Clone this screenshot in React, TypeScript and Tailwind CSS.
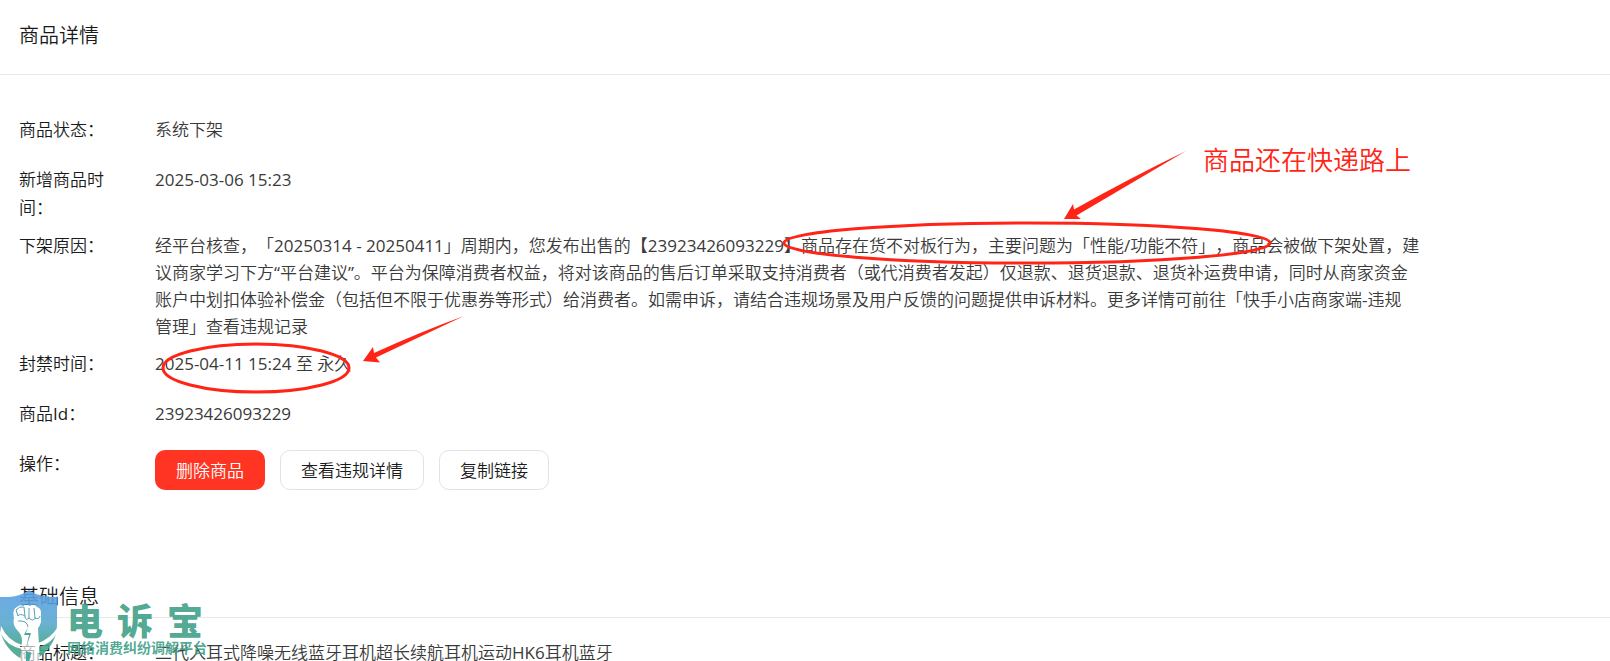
import type { ReactNode } from 'react';

function Row({ label, children }: { label: string; children: ReactNode }) {
  return (
    <div className="mb-[10px] flex min-h-10 items-start">
      <dt className="w-[96px] shrink-0 leading-[28px] text-[#1a1a1a]">{label}</dt>
      <dd className="ml-10 leading-[27px] text-[#3a3a3a]">{children}</dd>
    </div>
  );
}

const outlineButton =
  'h-10 rounded-[10px] border border-[#e1e3eb] bg-white px-5 text-[#1a1a1a]';

function Annotations() {
  return (
    <div className="pointer-events-none absolute left-0 top-0">
      <svg width="1460" height="420" viewBox="0 0 1460 420" fill="none" aria-hidden="true">
        <ellipse cx="1027" cy="243" rx="243" ry="20" stroke="#ff2416" strokeWidth="3" />
        <ellipse cx="256" cy="368" rx="93" ry="24" stroke="#ff2416" strokeWidth="3" />
        <path d="M1186 151 L1076.500 215.500 L1081 219 L1064 219 L1073 204 L1074 209.500 Q1130 178 1186 151 Z" fill="#ff2416" />
        <path d="M464 316 L376 357.500 L380 362.500 L363 361 L373 347 L374 353 Q420 332 464 316 Z" fill="#ff2416" />
      </svg>
      <p className="absolute left-[1203px] top-[142px] whitespace-nowrap text-[26px] leading-[36px] text-[#ff2416]">
        商品还在快递路上
      </p>
    </div>
  );
}

function ShieldLogo() {
  return (
    <svg className="shrink-0" width="58" height="76" viewBox="0 0 58 76" aria-hidden="true">
      <defs>
        <linearGradient id="shield" x1="0" y1="0" x2="0" y2="1">
          <stop offset="0" stopColor="#5b9fe6" />
          <stop offset="0.45" stopColor="#5aa9cf" />
          <stop offset="0.75" stopColor="#45a58b" />
        </linearGradient>
        <mask id="cutout">
          <rect width="58" height="76" fill="#ffffff" />
          <path d="M1 38 Q8 53 22 57 L22 61 Q7 58 1 46 Z" />
          <path d="M58 39 Q50 51 38 55 L38 59 Q51 56 57 45 Z" />
          <path d="M17 19 Q20 16 23 18 Q27 15 30 18 Q34 15 37 19 Q41 20 41 25 L41 34 Q40 38 38 40 L40 76 L20 76 L22 53 Q22 47 18 43 Q12 37 14 30 Q12 21 17 19 Z" />
        </mask>
      </defs>
      <path
        d="M17 19 Q20 16 23 18 Q27 15 30 18 Q34 15 37 19 Q41 20 41 25 L41 34 Q40 38 38 40 L40 76 L20 76 L22 53 Q22 47 18 43 Q12 37 14 30 Q12 21 17 19 Z"
        fill="#ffffff"
        fillOpacity="0.65"
      />
      <path
        d="M29 2 C20 9 10 9 0 9 V36 C0 56 14 68 29 75 C44 68 57 56 57 36 V9 C47 9 37 8 29 2Z"
        fill="url(#shield)"
        fillOpacity="0.9"
        mask="url(#cutout)"
      />
      <path
        d="M16 22 Q19 18 24 19 L25 29 Q26 33 29 30 V20 M29 30 Q33 34 35 30 L34 20 M35 30 Q39 32 40 28 M16 22 L18 28 Q20 25 25 28 M18 33 Q27 32 28 39"
        fill="none"
        stroke="#55a4b5"
        strokeWidth="1"
        strokeLinejoin="round"
      />
      <path d="M28 39 L24 47 L29 47 L26 60 L31 45 L26 45 Z M26 63 L31 65 L29 75 L26 73 Z" fill="#4aa69a" />
    </svg>
  );
}

function Watermark() {
  return (
    <div className="pointer-events-none absolute left-0 top-[588px] flex h-[73px] items-start overflow-hidden font-['Noto_Sans_CJK_SC',sans-serif] text-[#3c9e86]/90">
      <ShieldLogo />
      <div className="ml-[9px] pt-[12px]">
        <div className="flex gap-[14px] text-[36px] font-black leading-[38px]">
          <span>电</span>
          <span>诉</span>
          <span>宝</span>
        </div>
        <div className="text-[14px] font-bold leading-[18px]">网络消费纠纷调解平台</div>
      </div>
    </div>
  );
}

export default function App() {
  return (
    <main className="relative overflow-hidden bg-white font-['Open_Sans','Noto_Sans_CJK_SC_DemiLight','Noto_Sans_CJK_SC',sans-serif] text-[17px] font-normal [text-spacing-trim:space-all]">
      <header className="border-b border-[#e8e8e8] px-[19px] pb-[23px] pt-[21px]">
        <h1 className="text-[20px] leading-[30px] text-[#1a1a1a]">商品详情</h1>
      </header>
      <dl className="px-[19px] pt-[41px]">
        <Row label="商品状态：">系统下架</Row>
        <Row label="新增商品时间：">2025-03-06 15:23</Row>
        <Row label="下架原因：">
          经平台核查，「20250314 - 20250411」周期内，您发布出售的【23923426093229】商品存在货不对板行为，主要问题为「性能/功能不符」，商品会被做下架处置，建
          <br />
          议商家学习下方“平台建议”。平台为保障消费者权益，将对该商品的售后订单采取支持消费者（或代消费者发起）仅退款、退货退款、退货补运费申请，同时从商家资金
          <br />
          账户中划扣体验补偿金（包括但不限于优惠券等形式）给消费者。如需申诉，请结合违规场景及用户反馈的问题提供申诉材料。更多详情可前往「快手小店商家端-违规
          <br />
          管理」查看违规记录
        </Row>
        <Row label="封禁时间：">2025-04-11 15:24 至 永久</Row>
        <Row label="商品Id：">23923426093229</Row>
        <Row label="操作：">
          <div className="flex gap-[15px]">
            <button type="button" className="h-10 rounded-[10px] bg-[#ff3422] px-[21px] text-white">
              删除商品
            </button>
            <button type="button" className={outlineButton}>查看违规详情</button>
            <button type="button" className={outlineButton}>复制链接</button>
          </div>
        </Row>
      </dl>
      <section className="pt-[82px]">
        <h2 className="border-b border-[#e8e8e8] px-[19px] pb-[5px] text-[20px] leading-[30px] text-[#1a1a1a]">基础信息</h2>
        <dl className="px-[19px] pt-[21px]">
          <Row label="商品标题：">二代入耳式降噪无线蓝牙耳机超长续航耳机运动HK6耳机蓝牙</Row>
        </dl>
      </section>
      <Annotations />
      <Watermark />
    </main>
  );
}
